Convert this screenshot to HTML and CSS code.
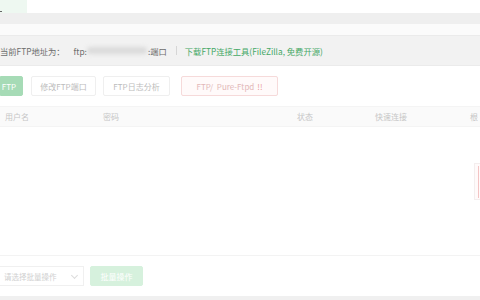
FILE: index.html
```html
<!DOCTYPE html>
<html lang="zh">
<head>
<meta charset="utf-8">
<link rel="stylesheet" href="styles.css">
</head>
<body>
<div class="page">
  <div class="topbar"><div class="tab"><span class="mark"></span></div></div>
  <div class="band1"></div>
  <div class="band2"></div>
  <div class="addr">
    <span class="lbl">当前FTP地址为：</span>
    <span class="ftp">ftp:</span><span class="blur"></span><span class="port">:端口</span>
    <span class="sep"></span>
    <span class="link">下载FTP连接工具(FileZilla, 免费开源)</span>
  </div>
  <div class="toolbar">
    <span class="btn green">FTP</span>
    <span class="btn port-btn">修改FTP端口</span>
    <span class="btn log-btn">FTP日志分析</span>
    <span class="btn warn">FTP/&nbsp; Pure-Ftpd <b>!!</b></span>
  </div>
  <div class="thead">
    <span class="c1">用户名</span>
    <span class="c2">密码</span>
    <span class="c3">状态</span>
    <span class="c4">快速连接</span>
    <span class="c5">根</span>
  </div>
  <div class="tbody"></div>
  <div class="footer">
    <span class="select">请选择批量操作<span class="chev"></span></span>
    <span class="btn batch">批量操作</span>
  </div>
  <div class="bottomband"></div>
  <div class="edge"></div>
</div>
</body>
</html>
```
FILE: styles.css
```css
html, body { margin: 0; padding: 0; }
body {
  width: 480px;
  height: 300px;
  overflow: hidden;
  background: #ffffff;
  font-family: "Noto Sans CJK SC", "Noto Sans", sans-serif;
  font-size: 8px;
}
.page { position: relative; width: 480px; height: 300px; display: flex; flex-direction: column; }
.topbar { height: 13px; background: #ffffff; display: flex; }
.tab { width: 27px; height: 13px; background: #eef8f1; position: relative; }
.mark { position: absolute; left: 0; top: 11px; width: 2px; height: 1px; background: #666; }
.band1 { height: 11px; background: #efefef; }
.band2 { height: 11px; background: #fbfbfb; }
.addr {
  height: 29px;
  background: #f2f2f2;
  border-top: 1px solid #ebebeb;
  border-bottom: 1px solid #ebebeb;
  display: flex;
  align-items: center;
  color: #6c6c6c;
  white-space: nowrap;
  font-size: 8.3px;
}
.ftp { margin-left: 9px; }
.blur { width: 60px; height: 7px; background: #dadada; filter: blur(2px); border-radius: 3px; }
.port { margin-left: 1px; }
.sep { width: 1px; height: 9px; background: #d6d6d6; margin: 0 8px 0 9px; }
.link { color: #45a866; }
.toolbar { display: flex; align-items: center; padding-top: 10px; height: 20px; }
.btn {
  height: 20px;
  box-sizing: border-box;
  border: 1px solid #efefef;
  border-radius: 2px;
  color: #bcbcbc;
  display: inline-flex;
  align-items: center;
  justify-content: center;
  white-space: nowrap;
  background: #fff;
}
.btn.green { background: #a6dbb6; border-color: #a6dbb6; color: #ffffff; padding: 0 6px 0 0; width: 23px; justify-content: flex-end; border-radius: 0 2px 2px 0; }
.btn.port-btn { margin-left: 8px; width: 65px; }
.btn.log-btn { margin-left: 7px; width: 67px; }
.btn.warn { margin-left: 11px; width: 97px; border-color: #f6dada; background: #fffafa; color: #e2b8b8; }
.btn.warn b { font-weight: normal; color: #eaa0a0; margin-left: 3px; }
.thead {
  margin-top: 10px;
  height: 19px;
  background: #fafafa;
  border-top: 1px solid #f4f4f4;
  border-bottom: 1px solid #f4f4f4;
  display: grid;
  grid-template-columns: 98px 194px 78px 95px 15px;
  align-items: center;
  color: #c6c6c6;
  padding-left: 5px;
}
.tbody { height: 128px; border-bottom: 1px solid #f3f3f3; }
.footer { display: flex; align-items: center; padding-top: 10px; height: 20px; }
.select {
  width: 84px; height: 20px; box-sizing: border-box;
  border: 1px solid #f0f0f0; border-left: none;
  color: #d0d0d0; display: inline-flex; align-items: center;
  padding-left: 4px; position: relative; font-size: 7.5px;
}
.chev { position: absolute; right: 6px; top: 6px; width: 4px; height: 4px; border-right: 1px solid #dcdcdc; border-bottom: 1px solid #dcdcdc; transform: rotate(45deg); }
.btn.batch { margin-left: 6px; width: 53px; background: #d6f1dd; border-color: #d6f1dd; color: #ffffff; padding: 0; }
.bottomband { margin-top: auto; height: 4px; background: #f0f0f0; }
.edge { position: absolute; left: 474px; top: 163px; width: 6px; height: 37px; box-sizing: border-box; border: 1px solid #f4eeee; border-right: none; background: #fffafa; }
.edge::after { content: ""; position: absolute; right: 1px; top: 2px; width: 1px; height: 32px; background: #f3c4c4; }
```
